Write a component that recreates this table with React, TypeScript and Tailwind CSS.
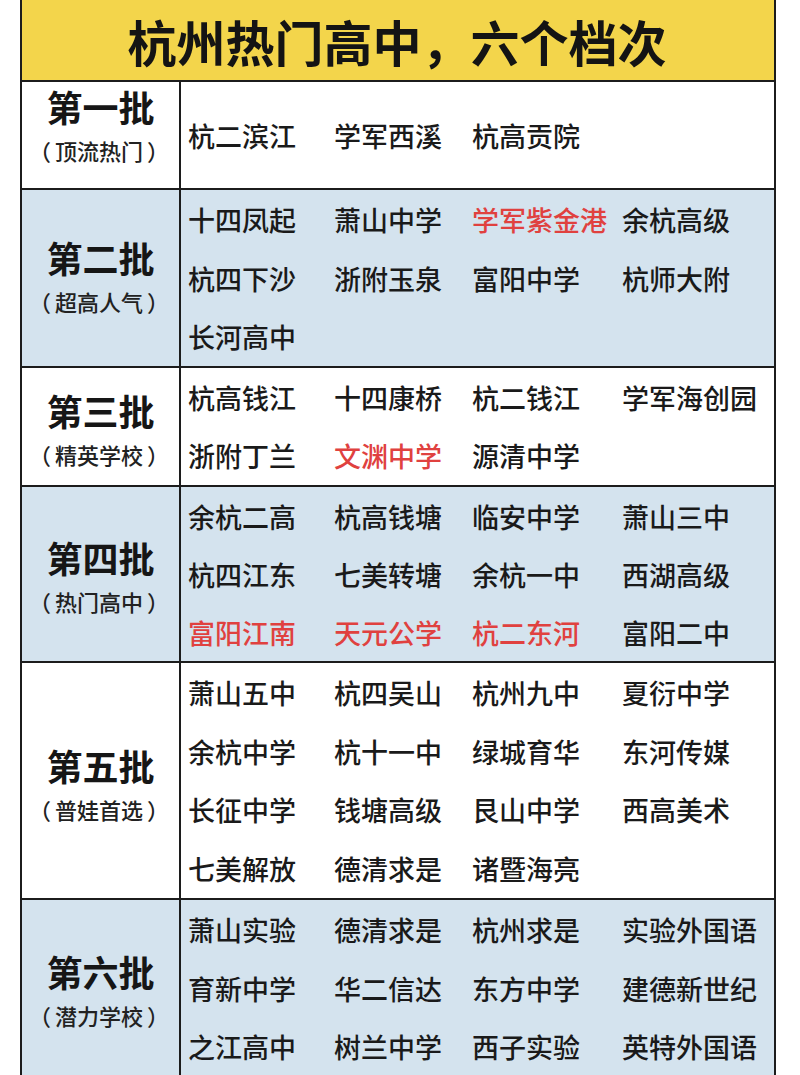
import React from "react";

type Name = { t: string; red?: boolean };
type Row = {
  label: string;
  sub: string;
  blue: boolean;
  h: string;
  pad: string;
  lines: Name[][];
};

const n = (t: string, red = false): Name => ({ t, red });

const rows: Row[] = [
  {
    label: "第一批",
    sub: "顶流热门",
    blue: false,
    h: "h-[108px]",
    pad: "pb-[22px]",
    lines: [[n("杭二滨江"), n("学军西溪"), n("杭高贡院")]],
  },
  {
    label: "第二批",
    sub: "超高人气",
    blue: true,
    h: "h-[178px]",
    pad: "pb-[6px]",
    lines: [
      [n("十四凤起"), n("萧山中学"), n("学军紫金港", true), n("余杭高级")],
      [n("杭四下沙"), n("浙附玉泉"), n("富阳中学"), n("杭师大附")],
      [n("长河高中")],
    ],
  },
  {
    label: "第三批",
    sub: "精英学校",
    blue: false,
    h: "h-[119px]",
    pad: "pt-[2px]",
    lines: [
      [n("杭高钱江"), n("十四康桥"), n("杭二钱江"), n("学军海创园")],
      [n("浙附丁兰"), n("文渊中学", true), n("源清中学")],
    ],
  },
  {
    label: "第四批",
    sub: "热门高中",
    blue: true,
    h: "h-[176px]",
    pad: "pt-[2px]",
    lines: [
      [n("余杭二高"), n("杭高钱塘"), n("临安中学"), n("萧山三中")],
      [n("杭四江东"), n("七美转塘"), n("余杭一中"), n("西湖高级")],
      [n("富阳江南", true), n("天元公学", true), n("杭二东河", true), n("富阳二中")],
    ],
  },
  {
    label: "第五批",
    sub: "普娃首选",
    blue: false,
    h: "h-[237px]",
    pad: "pt-[4px]",
    lines: [
      [n("萧山五中"), n("杭四吴山"), n("杭州九中"), n("夏衍中学")],
      [n("余杭中学"), n("杭十一中"), n("绿城育华"), n("东河传媒")],
      [n("长征中学"), n("钱塘高级"), n("艮山中学"), n("西高美术")],
      [n("七美解放"), n("德清求是"), n("诸暨海亮")],
    ],
  },
  {
    label: "第六批",
    sub: "潜力学校",
    blue: true,
    h: "h-[178px]",
    pad: "pt-[2px]",
    lines: [
      [n("萧山实验"), n("德清求是"), n("杭州求是"), n("实验外国语")],
      [n("育新中学"), n("华二信达"), n("东方中学"), n("建德新世纪")],
      [n("之江高中"), n("树兰中学"), n("西子实验"), n("英特外国语")],
    ],
  },
];

export default function App() {
  return (
    <div
      className="w-[800px] h-[1075px] overflow-hidden bg-white"
      style={{ fontFamily: '"Noto Sans CJK SC", "Noto Sans", sans-serif' }}
    >
      <div className="ml-[20px] w-[756px] border-x-[2px] border-[#1c1c1c] text-[#1a1a1a]">
        <div className="h-[82px] bg-[#f3d54b] border-b-[2px] border-[#1c1c1c] flex items-center justify-center">
          <div className="text-[49px] font-bold leading-none text-[#141414] -ml-[2px]">
            杭州热门高中，六个档次
          </div>
        </div>
        {rows.map((r, i) => (
          <div
            key={i}
            className={`${r.h} flex border-b-[2px] border-[#1c1c1c] ${r.blue ? "bg-[#d4e3ee]" : "bg-white"}`}
          >
            <div
              className={`w-[159px] shrink-0 border-r-[2px] border-[#1c1c1c] flex flex-col items-center justify-center ${r.pad}`}
            >
              <div className="text-[36px] font-bold leading-[44px] text-[#161616]">{r.label}</div>
              <div className="text-[22px] font-medium leading-[28px] mt-[8px] text-[#222] whitespace-nowrap -ml-[3px]">
                （<span className="mx-[4px]">{r.sub}</span>）
              </div>
            </div>
            <div
              className={`flex-1 pl-[7px] flex flex-col ${r.lines.length === 1 ? "justify-center" : ""}`}
            >
              {r.lines.map((line, j) => (
                <div
                  key={j}
                  className={`grid grid-cols-[146px_138px_150px_1fr] items-center ${r.lines.length === 1 ? "" : "flex-1"}`}
                >
                  {line.map((s, k) => (
                    <div
                      key={k}
                      className={`text-[27px] font-medium leading-none whitespace-nowrap ${s.red ? "text-[#e0413f]" : "text-[#1a1a1a]"}`}
                    >
                      {s.t}
                    </div>
                  ))}
                </div>
              ))}
            </div>
          </div>
        ))}
      </div>
    </div>
  );
}
